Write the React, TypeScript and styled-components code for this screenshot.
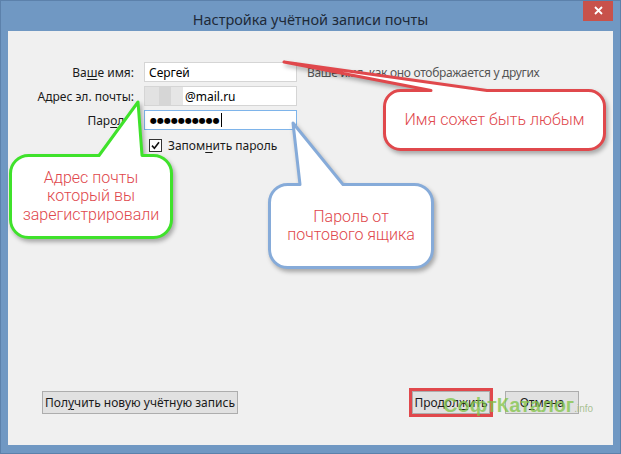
import React from 'react';
import styled, { createGlobalStyle } from 'styled-components';

const GlobalStyle = createGlobalStyle`
  html, body {
    margin: 0;
    padding: 0;
    background: #6f97c2;
  }
  body {
    font-family: "Noto Sans", "Open Sans", sans-serif;
  }
`;

const Window = styled.div`
  position: relative;
  width: 621px;
  height: 454px;
  box-sizing: border-box;
  background: #7098c3;
  border: 1px solid #5c81ab;
  padding: 0 7px 8px 7px;
  display: flex;
  flex-direction: column;
  overflow: hidden;
`;

const TitleBar = styled.div`
  height: 30px;
  flex: none;
  display: grid;
  grid-template-columns: 1fr auto 1fr;
  align-items: start;
`;

const Title = styled.div`
  grid-column: 2;
  font-size: 14.5px;
  line-height: 30px;
  margin-top: 3px;
  color: #1e2a38;
  white-space: nowrap;
`;

const CloseButton = styled.div`
  grid-column: 3;
  justify-self: end;
  width: 30px;
  height: 21px;
  margin-top: -1px;
  background: #c8524b;
  display: flex;
  align-items: center;
  justify-content: center;
`;

const Client = styled.div`
  flex: 1;
  background: #f0f0f0;
  display: flex;
  flex-direction: column;
  padding: 31px 34px 31px 0;
  font-size: 12px;
  color: #000;
`;

const Form = styled.div`
  display: grid;
  grid-template-columns: 126px 153px 1fr;
  grid-auto-rows: 20px;
  column-gap: 10px;
  row-gap: 4px;
  align-items: center;
`;

const Label = styled.div`
  text-align: right;
  white-space: nowrap;
  color: #1a1a1a;
`;

const Key = styled.span`
  text-decoration: underline;
  text-underline-offset: 2px;
`;

const Field = styled.div<{ $focused?: boolean; $pad?: number }>`
  height: 20px;
  box-sizing: border-box;
  background: #fff;
  border: 1px solid ${(p) => (p.$focused ? '#7eb4ea' : '#d5d5d5')};
  padding-left: ${(p) => (p.$pad ?? 4)}px;
  display: flex;
  align-items: center;
  white-space: nowrap;
`;

const Redacted = styled.span`
  align-self: stretch;
  width: 38px;
  margin-right: 2px;
  background: linear-gradient(
    to right,
    #e2e2e2 0,
    #e2e2e2 14px,
    #d6d6d6 14px,
    #d6d6d6 26px,
    #e6e6e6 26px
  );
`;

const Dots = styled.span`
  font-family: "DejaVu Sans", sans-serif;
  font-size: 8px;
  color: #000;
`;

const Caret = styled.span`
  width: 1px;
  height: 14px;
  background: #000;
  margin-left: 1px;
`;

const Hint = styled.div`
  color: #555;
  white-space: nowrap;
  letter-spacing: -0.3px;
`;

const CheckRow = styled.label`
  grid-column: 2 / span 2;
  display: flex;
  align-items: center;
  gap: 6px;
  padding-left: 5px;
  margin-top: 3px;
  height: 14px;
  color: #1a1a1a;
  white-space: nowrap;
`;

const Box = styled.span`
  width: 13px;
  height: 13px;
  box-sizing: border-box;
  background: #fff;
  border: 1px solid #333;
  display: flex;
  align-items: center;
  justify-content: center;
`;

const Footer = styled.div`
  margin-top: auto;
  display: flex;
  align-items: center;
  padding-left: 34px;
`;

const Spacer = styled.div`
  flex: 1;
`;

const Button = styled.div<{ $width: number; $highlight?: boolean; $gap?: number }>`
  width: ${(p) => p.$width}px;
  height: 23px;
  box-sizing: border-box;
  margin-left: ${(p) => p.$gap ?? 0}px;
  background: #e1e1e1;
  border: 1px solid #adadad;
  display: flex;
  align-items: center;
  justify-content: center;
  color: #1a1a1a;
  white-space: nowrap;
  outline: ${(p) => (p.$highlight ? '3px solid #e0484c' : 'none')};
`;

const Overlay = styled.svg`
  position: absolute;
  left: 0;
  top: 0;
  width: 621px;
  height: 454px;
  pointer-events: none;
  overflow: visible;
`;

const Bubble = styled.path`
  fill: #fff;
  stroke-width: 3px;
  stroke-linejoin: round;
  filter: drop-shadow(2px 3px 2px rgba(0, 0, 0, 0.3));
`;

const CalloutText = styled.div<{ $x: number; $y: number; $w: number; $h: number }>`
  position: absolute;
  left: ${(p) => p.$x}px;
  top: ${(p) => p.$y}px;
  width: ${(p) => p.$w}px;
  height: ${(p) => p.$h}px;
  display: flex;
  flex-direction: column;
  align-items: center;
  justify-content: center;
  font-family: Roboto, "Liberation Sans", sans-serif;
  font-weight: 300;
  font-size: 16px;
  line-height: 18.5px;
  color: #e0474c;
  text-align: center;
  pointer-events: none;
`;

const Watermark = styled.div`
  position: absolute;
  left: 442px;
  top: 393px;
  font-family: "Liberation Sans", Arial, sans-serif;
  font-weight: bold;
  font-size: 20px;
  color: rgba(128, 196, 70, 0.75);
  white-space: nowrap;
  pointer-events: none;
`;

const WatermarkSuffix = styled.span`
  font-weight: normal;
  font-size: 10px;
  color: rgba(150, 180, 120, 0.8);
`;

type Callout = {
  x: number;
  y: number;
  w: number;
  h: number;
  r: number;
  b1: number;
  tip: [number, number];
  b2: number;
  stroke: string;
  lines: string[];
};

const callouts: Callout[] = [
  {
    x: 383.5,
    y: 89.5,
    w: 220,
    h: 59,
    r: 16,
    b1: 430,
    tip: [283, 61],
    b2: 486,
    stroke: '#e0484c',
    lines: ['Имя сожет быть любым'],
  },
  {
    x: 9.5,
    y: 154.5,
    w: 161,
    h: 82,
    r: 18,
    b1: 98,
    tip: [137, 101],
    b2: 141,
    stroke: '#3fe22b',
    lines: ['Адрес почты', 'который вы', 'зарегистрировали'],
  },
  {
    x: 268.5,
    y: 183.5,
    w: 163,
    h: 83,
    r: 18,
    b1: 299,
    tip: [292, 122],
    b2: 342,
    stroke: '#86abd9',
    lines: ['Пароль от', 'почтового ящика'],
  },
];

const bubblePath = (c: Callout) => {
  const { x, y, w, h, r, b1, tip, b2 } = c;
  return [
    `M${x + r},${y}`,
    `L${b1},${y}`,
    `L${tip[0]},${tip[1]}`,
    `L${b2},${y}`,
    `L${x + w - r},${y}`,
    `A${r},${r} 0 0 1 ${x + w},${y + r}`,
    `L${x + w},${y + h - r}`,
    `A${r},${r} 0 0 1 ${x + w - r},${y + h}`,
    `L${x + r},${y + h}`,
    `A${r},${r} 0 0 1 ${x},${y + h - r}`,
    `L${x},${y + r}`,
    `A${r},${r} 0 0 1 ${x + r},${y}`,
    'Z',
  ].join(' ');
};

export default function App() {
  return (
    <>
      <GlobalStyle />
      <Window>
        <TitleBar>
          <Title>Настройка учётной записи почты</Title>
          <CloseButton>
            <svg width="9" height="9" viewBox="0 0 9 9">
              <path d="M1 1 L8 8 M8 1 L1 8" stroke="#fff" strokeWidth="1.8" />
            </svg>
          </CloseButton>
        </TitleBar>
        <Client>
          <Form>
            <Label>
              Ва<Key>ш</Key>е имя:
            </Label>
            <Field>Сергей</Field>
            <Hint>Ваше имя, как оно отображается у других</Hint>

            <Label>Адрес эл. почты:</Label>
            <Field $pad={0}>
              <Redacted />
              @mail.ru
            </Field>
            <div />

            <Label>
              Пар<Key>о</Key>ль:
            </Label>
            <Field $focused $pad={5}>
              <Dots>●●●●●●●●●●</Dots>
              <Caret />
            </Field>
            <div />

            <CheckRow>
              <Box>
                <svg width="9" height="9" viewBox="0 0 9 9">
                  <path d="M1 4.6 L3.4 7.2 L8 1.2" fill="none" stroke="#111" strokeWidth="1.6" />
                </svg>
              </Box>
              <span>
                Запом<Key>н</Key>ить пароль
              </span>
            </CheckRow>
          </Form>

          <Footer>
            <Button $width={196}>
              Пол<Key>у</Key>чить новую учётную запись
            </Button>
            <Spacer />
            <Button $width={78} $highlight>
              Продол<Key>ж</Key>ить
            </Button>
            <Button $width={74} $gap={15}>
              О<Key>т</Key>мена
            </Button>
          </Footer>
        </Client>

        <Watermark>
          СофтКаталог<WatermarkSuffix>.info</WatermarkSuffix>
        </Watermark>

        <Overlay viewBox="0 0 621 454">
          {callouts.map((c, i) => (
            <Bubble key={i} d={bubblePath(c)} stroke={c.stroke} />
          ))}
        </Overlay>
        {callouts.map((c, i) => (
          <CalloutText key={i} $x={c.x} $y={c.y} $w={c.w} $h={c.h}>
            {c.lines.map((l) => (
              <span key={l}>{l}</span>
            ))}
          </CalloutText>
        ))}
      </Window>
    </>
  );
}
